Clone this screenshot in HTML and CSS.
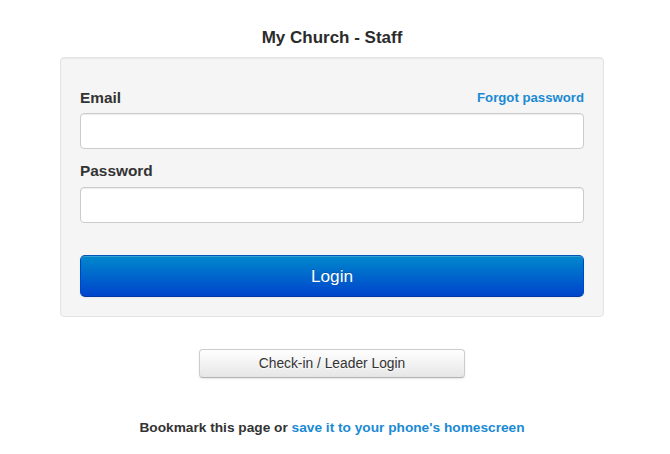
FILE: index.html
```html
<!DOCTYPE html>
<html>
<head>
<meta charset="utf-8">
<title>My Church - Staff</title>
<link rel="stylesheet" href="styles.css">
</head>
<body>
<div class="page">
  <h1 class="title">My Church - Staff</h1>
  <form class="well">
    <div class="label-row">
      <label class="label" for="email">Email</label>
      <a class="forgot" href="#">Forgot password</a>
    </div>
    <input class="field" id="email" type="text">
    <div class="label-row second">
      <label class="label" for="password">Password</label>
    </div>
    <input class="field" id="password" type="password">
    <button class="btn-primary" type="button">Login</button>
  </form>
  <div class="alt">
    <button class="btn" type="button">Check-in / Leader Login</button>
  </div>
  <p class="note">Bookmark this page or <a href="#">save it to your phone's homescreen</a></p>
</div>
</body>
</html>
```
FILE: styles.css
```css
html, body {
  margin: 0;
  padding: 0;
  background: #ffffff;
}
body {
  font-family: "Liberation Sans", Arial, sans-serif;
  color: #333333;
}
.page {
  width: 544px;
  margin-left: 60px;
  padding-top: 28px;
}
.title {
  margin: 0 0 9px;
  font-size: 17px;
  line-height: 20px;
  font-weight: bold;
  text-align: center;
  color: #2b2b2b;
}
.well {
  display: flex;
  flex-direction: column;
  margin: 0;
  padding: 30px 19px 19px;
  background: #f5f5f5;
  border: 1px solid #e3e3e3;
  border-radius: 4px;
  box-shadow: inset 0 1px 1px rgba(0,0,0,0.05);
}
.label-row {
  display: flex;
  justify-content: space-between;
  align-items: baseline;
  height: 20px;
  margin-bottom: 5px;
}
.label-row.second {
  margin-top: 12px;
  margin-bottom: 6px;
}
.label {
  font-size: 15.4px;
  line-height: 20px;
  font-weight: bold;
  color: #333333;
}
.forgot {
  font-size: 13.2px;
  font-weight: bold;
  color: #1a8ad4;
  text-decoration: none;
  position: relative;
  top: -1px;
}
.field {
  box-sizing: border-box;
  display: block;
  width: 100%;
  height: 36px;
  margin: 0;
  padding: 6px 10px;
  background: #ffffff;
  border: 1px solid #cccccc;
  border-radius: 4px;
  box-shadow: inset 0 1px 1px rgba(0,0,0,0.075);
  font-family: inherit;
  font-size: 15px;
}
.btn-primary {
  box-sizing: border-box;
  display: block;
  width: 100%;
  height: 42px;
  margin-top: 32px;
  padding: 0;
  border: 1px solid #0044aa;
  border-color: #0055bb #0044cc #0036a6;
  border-radius: 5px;
  background: linear-gradient(to bottom, #0088cc, #0044cc);
  color: #ffffff;
  font-family: inherit;
  font-size: 17.2px;
  line-height: 40px;
  text-shadow: 0 -1px 0 rgba(0,0,0,0.2);
  box-shadow: inset 0 1px 0 rgba(255,255,255,0.2), 0 1px 2px rgba(0,0,0,0.05);
}
.alt {
  display: flex;
  justify-content: center;
  margin-top: 32px;
}
.btn {
  box-sizing: border-box;
  width: 266px;
  height: 29px;
  padding: 0;
  margin: 0 0 0 0;
  border: 1px solid #cccccc;
  border-bottom-color: #b3b3b3;
  border-radius: 4px;
  background: linear-gradient(to bottom, #ffffff, #e6e6e6);
  color: #333333;
  font-family: inherit;
  font-size: 13.8px;
  line-height: 27px;
  text-shadow: 0 1px 1px rgba(255,255,255,0.75);
  box-shadow: inset 0 1px 0 rgba(255,255,255,0.2), 0 1px 2px rgba(0,0,0,0.1);
}
.note {
  margin: 41px 0 0;
  font-size: 13.7px;
  line-height: 18px;
  font-weight: bold;
  text-align: center;
  color: #333333;
}
.note a {
  color: #1a8ad4;
  text-decoration: none;
}
```
